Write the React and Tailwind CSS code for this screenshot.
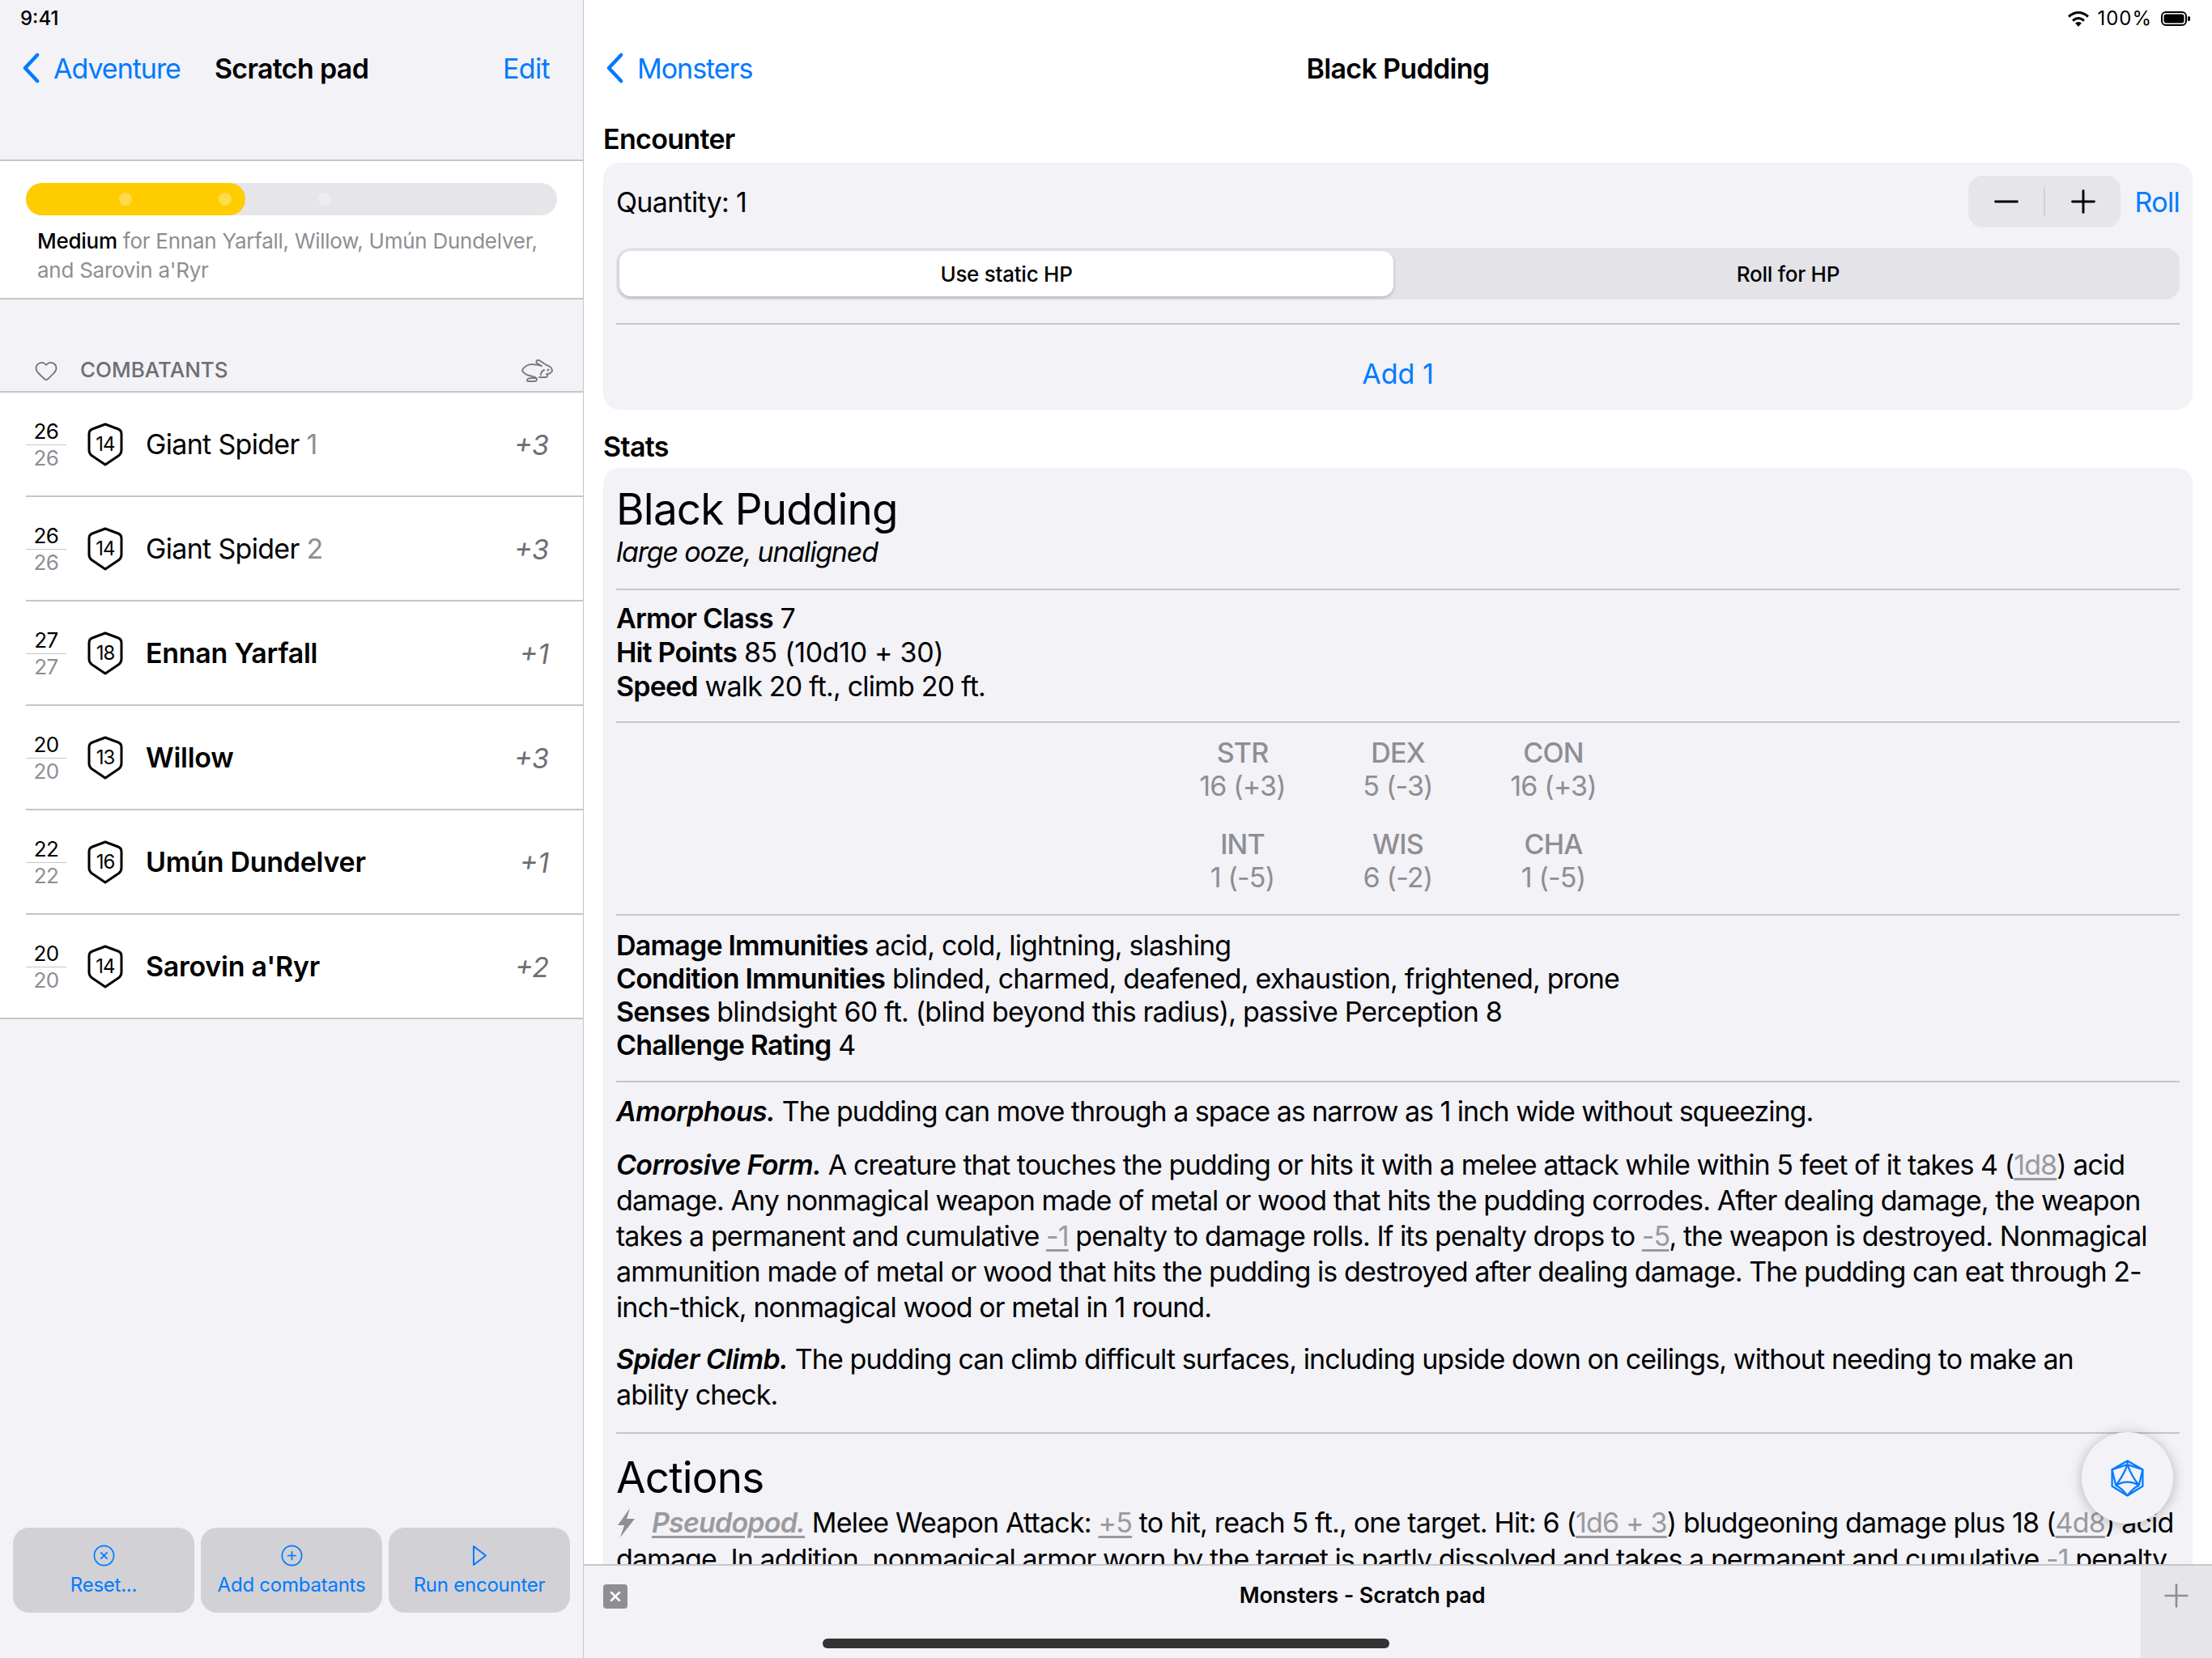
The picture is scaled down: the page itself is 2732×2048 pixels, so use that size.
import { Heart, CircleX, CirclePlus, Minus, Plus, X } from "lucide-react";

const font = "font-['Inter','Liberation_Sans',sans-serif]";

const combatants = [
  { hp: 26, ac: 14, name: "Giant Spider", index: 1, mod: "+3" },
  { hp: 26, ac: 14, name: "Giant Spider", index: 2, mod: "+3" },
  { hp: 27, ac: 18, name: "Ennan Yarfall", mod: "+1" },
  { hp: 20, ac: 13, name: "Willow", mod: "+3" },
  { hp: 22, ac: 16, name: "Umún Dundelver", mod: "+1" },
  { hp: 20, ac: 14, name: "Sarovin a'Ryr", mod: "+2" },
];

function Back({ className }) {
  return (
    <svg viewBox="0 0 22 38" className={`w-[22px] h-[38px] ${className}`} fill="none" stroke="#007aff" strokeWidth="4.5" strokeLinecap="round" strokeLinejoin="round">
      <path d="M19 3 L4 19 L19 35" />
    </svg>
  );
}

function Shield({ ac }) {
  return (
    <div className="relative w-[44px] h-[54px] flex items-center justify-center">
      <svg viewBox="0 0 44 54" className="absolute inset-0 w-full h-full" fill="none" stroke="#000" strokeWidth="3" strokeLinejoin="round">
        <path d="M22 2 L38 8 Q42 9.5 42 14 V34 Q42 38 39 40.5 L22 52 L5 40.5 Q2 38 2 34 V14 Q2 9.5 6 8 Z" />
      </svg>
      <span className="relative text-[24px] tracking-[-0.04em]">{ac}</span>
    </div>
  );
}

function Row({ c, last }) {
  const isPlayer = !c.index;
  return (
    <div className={`pl-[32px] bg-white ${last ? "h-[127px]" : "h-[129px]"}`}>
      <div className={`h-full flex items-center pr-[42px] ${last ? "" : "border-b-2 border-[#c6c6c8]"}`}>
        <div className="w-[50px] pt-[2px] flex flex-col items-center text-[26px] leading-[32px] tracking-[-0.02em]">
          <span className="w-full text-center border-b border-[#c6c6c8]">{c.hp}</span>
          <span className="text-[#8e8e93]">{c.hp}</span>
        </div>
        <div className="ml-[26px]">
          <Shield ac={c.ac} />
        </div>
        <div className={`ml-[28px] flex-1 text-[34px] ${isPlayer ? "font-semibold tracking-[-0.008em]" : "tracking-[-0.02em]"}`}>
          {c.name} {c.index && <span className="text-[#8e8e93]">{c.index}</span>}
        </div>
        <div className="pt-[2px] text-[34px] italic text-[#6e6e73]">{c.mod}</div>
      </div>
    </div>
  );
}

function SideButton({ icon, label }) {
  return (
    <div className="flex-1 h-[105px] rounded-[20px] bg-[#d1d1d6] flex flex-col items-center pt-[20px] gap-[7px] text-[#007aff]">
      {icon}
      <span className="text-[24px] leading-[30px] tracking-[-0.01em]">{label}</span>
    </div>
  );
}

function Sidebar() {
  return (
    <aside className="w-[721px] shrink-0 h-full bg-[#f2f2f7] border-r border-[#c6c6c8] flex flex-col">
      <div className="h-[199px] border-b-2 border-[#c6c6c8] shrink-0">
        <div className="h-[46px] pl-[25px] pt-[6px] text-[24px] leading-[34px] font-medium">9:41</div>
        <div className="flex items-center h-[76px] text-[34px] tracking-[-0.03em] text-[#007aff]">
          <Back className="ml-[27px]" />
          <span className="ml-[17px]">Adventure</span>
          <span className="ml-[42px] font-semibold text-black tracking-[-0.02em]">Scratch pad</span>
          <span className="ml-auto mr-[41px] tracking-[-0.02em]">Edit</span>
        </div>
      </div>
      <div className="h-[171px] bg-white border-b-2 border-[#c6c6c8] px-[32px] pt-[27px] shrink-0">
        <div className="relative h-[40px] rounded-full bg-[#e5e5ea]">
          <div className="h-full w-[271px] rounded-full bg-[#ffcc00]"></div>
          <span className="absolute left-[115px] top-[12px] w-[16px] h-[16px] rounded-full bg-white/30"></span>
          <span className="absolute left-[238px] top-[12px] w-[16px] h-[16px] rounded-full bg-white/30"></span>
          <span className="absolute left-[361px] top-[12px] w-[16px] h-[16px] rounded-full bg-white/30"></span>
        </div>
        <p className="mt-[14px] ml-[14px] text-[26px] leading-[36px] tracking-[-0.01em] text-[#8e8e93]">
          <span className="font-medium text-black">Medium</span> for Ennan Yarfall, Willow, Umún Dundelver, and Sarovin a'Ryr
        </p>
      </div>
      <div className="h-[115px] border-b-2 border-[#c6c6c8] flex items-end pb-[10px] pl-[42px] pr-[36px] shrink-0">
        <Heart className="w-[30px] h-[30px] text-[#6e6e73]" strokeWidth={1.4} />
        <span className="ml-[27px] text-[26px] leading-[32px] font-medium text-[#6e6e73]">COMBATANTS</span>
        <svg viewBox="0 0 40 28" className="ml-auto mb-[1px] w-[40px] h-[28px]" fill="none" stroke="#7c7c80" strokeWidth="2" strokeLinecap="round" strokeLinejoin="round">
          <path d="M38 14 C38 11 35 8 31 7 L22 1 C19 0 17 3 20 5 L25 8 C21 7 17 6 13 6 C7 6 2 10 1 14 C3 17 6 19 10 20 C14 21 15 21 17 22" />
          <path d="M8 24 C10 22.500 14 23 18 23 C20 24 19 27 16 27 L9 27 C7 27 6 25.500 8 24 Z" />
          <path d="M22 22 H30 C32 22 33 19 31 18 C34 18 37 17 38 14" />
          <path d="M24 19 C24 16 26 14 28 13" />
          <circle cx="33" cy="13" r="0.6" />
        </svg>
      </div>
      <div className="border-b-2 border-[#c6c6c8]">
        {combatants.map((c, i) => (
          <Row key={i} c={c} last={i === combatants.length - 1} />
        ))}
      </div>
      <div className="mt-auto flex gap-[8px] px-[16px] pb-[56px]">
        <SideButton icon={<CircleX className="w-[29px] h-[29px]" strokeWidth={1.4} />} label="Reset..." />
        <SideButton icon={<CirclePlus className="w-[29px] h-[29px]" strokeWidth={1.4} />} label="Add combatants" />
        <SideButton
          icon={
            <svg viewBox="0 0 24 29" className="w-[24px] h-[29px]" fill="none" stroke="#007aff" strokeWidth="2" strokeLinejoin="round">
              <path d="M5 3 L20 14.500 L5 26 Z" />
            </svg>
          }
          label="Run encounter"
        />
      </div>
    </aside>
  );
}

function Divider() {
  return <div className="h-[2px] bg-[#c6c6c8]"></div>;
}

function Dice({ children }) {
  return <span className="text-[#9a9a9e] underline underline-offset-4">{children}</span>;
}

function Ability({ name, value }) {
  return (
    <div className="w-[192px] text-center text-[#8e8e93] text-[34px] leading-[41px]">
      <div className="font-medium">{name}</div>
      <div>{value}</div>
    </div>
  );
}

function Detail() {
  return (
    <main className="relative flex-1 min-w-0 h-full bg-white flex flex-col">
      <div className="flex justify-end items-center h-[46px] pr-[27px] text-[24px] tracking-[0.04em] shrink-0">
        <svg viewBox="0 0 28 20" className="w-[28px] h-[20px]" fill="none" stroke="#000" strokeWidth="3">
          <path d="M2 7.500 Q14 -2.500 26 7.500" />
          <path d="M7 12.500 Q14 6.500 21 12.500" />
          <path d="M14 20 L10 15.500 Q14 12.500 18 15.500 Z" fill="#000" stroke="none" />
        </svg>
        <span className="ml-[10px]">100%</span>
        <svg viewBox="0 0 36 18" className="ml-[11px] w-[36px] h-[18px]">
          <rect x="1" y="1" width="30" height="16" rx="5" fill="none" stroke="#000" strokeWidth="2" />
          <rect x="3.500" y="3.500" width="25" height="11" rx="3" fill="#000" />
          <rect x="33" y="6" width="3" height="6" rx="1.500" fill="#000" />
        </svg>
      </div>
      <div className="relative flex items-center h-[76px] text-[34px] tracking-[-0.03em] text-[#007aff] shrink-0">
        <Back className="ml-[27px]" />
        <span className="ml-[17px]">Monsters</span>
        <span className="absolute inset-x-0 text-center font-semibold text-black tracking-[-0.02em]">Black Pudding</span>
      </div>
      <div className="flex-1 min-h-0 overflow-hidden px-[24px]">
        <h2 className="h-[79px] pt-[28px] text-[34px] leading-[44px] font-semibold tracking-[-0.02em]">Encounter</h2>
        <section className="h-[305px] rounded-[20px] bg-[#f2f2f7] px-[16px] pt-[16px]">
          <div className="flex items-center h-[64px] text-[34px] tracking-[-0.02em]">
            <span>Quantity: 1</span>
            <div className="ml-auto w-[188px] h-[64px] rounded-[18px] bg-[#e5e5ea] flex items-center">
              <div className="flex-1 flex justify-center"><Minus className="w-[46px] h-[46px]" strokeWidth={1.5} /></div>
              <div className="w-[2px] h-[36px] bg-[#d1d1d6]"></div>
              <div className="flex-1 flex justify-center"><Plus className="w-[46px] h-[46px]" strokeWidth={1.5} /></div>
            </div>
            <span className="ml-[17px] text-[#007aff]">Roll</span>
          </div>
          <div className="mt-[25px] h-[64px] rounded-[18px] bg-[#e3e3e8] p-[4px] flex text-[26px] font-medium tracking-[-0.01em]">
            <div className="w-[956px] rounded-[14px] bg-white shadow-[0_2px_4px_rgba(0,0,0,0.2)] flex items-center justify-center">Use static HP</div>
            <div className="flex-1 pl-[8px] flex items-center justify-center">Roll for HP</div>
          </div>
          <div className="mt-[29px]"><Divider /></div>
          <div className="h-[104px] pt-[16px] flex items-center justify-center text-[34px] text-[#007aff]">Add 1</div>
        </section>
        <h2 className="h-[72px] pt-[24px] text-[34px] leading-[44px] font-semibold tracking-[-0.02em]">Stats</h2>
        <section className="rounded-t-[20px] bg-[#f2f2f7] px-[16px] text-[34px] tracking-[-0.024em] leading-[42px]">
          <div className="pt-[21px] text-[53px] leading-[60px]">Black Pudding</div>
          <div className="mt-[2px] italic tracking-[-0.035em]">large ooze, unaligned</div>
          <div className="mt-[24px]"><Divider /></div>
          <div className="pt-[14px] pb-[22px]">
            <div><b className="font-semibold">Armor Class</b> 7</div>
            <div><b className="font-semibold">Hit Points</b> <span className="tracking-[-0.01em]">85 (10d10 + 30)</span></div>
            <div><b className="font-semibold">Speed</b> walk 20 ft., climb 20 ft.</div>
          </div>
          <Divider />
          <div className="pt-[16px] pb-[25px] flex flex-col items-center gap-[31px]">
            <div className="flex"><Ability name="STR" value="16 (+3)" /><Ability name="DEX" value="5 (-3)" /><Ability name="CON" value="16 (+3)" /></div>
            <div className="flex"><Ability name="INT" value="1 (-5)" /><Ability name="WIS" value="6 (-2)" /><Ability name="CHA" value="1 (-5)" /></div>
          </div>
          <Divider />
          <div className="pt-[16px] pb-[24px] leading-[41px]">
            <div><b className="font-semibold">Damage Immunities</b> acid, cold, lightning, slashing</div>
            <div><b className="font-semibold">Condition Immunities</b> blinded, charmed, deafened, exhaustion, frightened, prone</div>
            <div><b className="font-semibold">Senses</b> blindsight 60 ft. (blind beyond this radius), passive Perception 8</div>
            <div><b className="font-semibold">Challenge Rating</b> 4</div>
          </div>
          <Divider />
          <p className="mt-[14px] leading-[44px] tracking-[-0.03em]"><b className="font-semibold italic tracking-[-0.02em]">Amorphous.</b> The pudding can move through a space as narrow as 1 inch wide without squeezing.</p>
          <p className="mt-[22px] leading-[44px] tracking-[-0.027em]"><b className="font-semibold italic tracking-[-0.02em]">Corrosive Form.</b> A creature that touches the pudding or hits it with a melee attack while within 5 feet of it takes 4 (<Dice>1d8</Dice>) acid damage. Any nonmagical weapon made of metal or wood that hits the pudding corrodes. After dealing damage, the weapon takes a permanent and cumulative <Dice>-1</Dice> penalty to damage rolls. If its penalty drops to <Dice>-5</Dice>, the weapon is destroyed. Nonmagical ammunition made of metal or wood that hits the pudding is destroyed after dealing damage. The pudding can eat through 2-inch-thick, nonmagical wood or metal in 1 round.</p>
          <p className="mt-[20px] leading-[44px] tracking-[-0.027em]"><b className="font-semibold italic tracking-[-0.02em]">Spider Climb.</b> The pudding can climb difficult surfaces, including upside down on ceilings, without needing to make an<br />ability check.</p>
          <div className="mt-[24px]"><Divider /></div>
          <div className="pt-[24px] text-[53px] leading-[60px]">Actions</div>
          <p className="mt-[3px] leading-[45px]">
            <svg viewBox="0 0 24 38" className="inline-block align-[-7px] w-[24px] h-[38px] mr-[20px]" fill="#8e8e93">
              <path d="M17 1 L2 22 H10 L5 37 L23 14 H13 Z" />
            </svg>
            <b className="font-semibold italic text-[#9a9a9e] underline underline-offset-4">Pseudopod.</b> Melee Weapon Attack: <Dice>+5</Dice> to hit, reach 5 ft., one target. Hit: 6 (<Dice>1d6 + 3</Dice>) bludgeoning damage plus 18 (<Dice>4d8</Dice>) acid<br />
            <span className="tracking-[-0.027em]">damage. In addition, nonmagical armor worn by the target is partly dissolved and takes a permanent and cumulative <Dice>-1</Dice> penalty</span>
          </p>
        </section>
      </div>
      <div className="h-[116px] shrink-0 border-t-2 border-[#c6c6c8] bg-[#f2f2f7] flex relative z-10">
        <div className="w-[1923px] pl-[24px] pr-[54px] pt-[21px] flex">
          <div className="mt-[2px] w-[30px] h-[30px] rounded-[4px] bg-[#8e8e93] flex items-center justify-center">
            <X className="w-[20px] h-[20px] text-white" strokeWidth={3} />
          </div>
          <span className="flex-1 text-center text-[27px] leading-[32px] font-semibold tracking-[-0.005em]">Monsters - Scratch pad</span>
        </div>
        <div className="flex-1 bg-[#e5e5ea] flex items-start justify-center pt-[14px]">
          <Plus className="w-[46px] h-[46px] text-[#8e8e93]" strokeWidth={1.4} />
        </div>
      </div>
      <div className="absolute right-[48px] bottom-[166px] z-20 w-[113px] h-[113px] rounded-full bg-[#f2f2f7] shadow-[0_2px_16px_rgba(0,0,0,0.25)] flex items-center justify-center">
        <svg viewBox="0 0 40 45" className="w-[41px] h-[46px]" fill="none" stroke="#007aff" strokeWidth="2.200" strokeLinejoin="round">
          <path d="M20 1.500 L38.500 12 V32 L20 43.500 L1.500 32 V12 Z" />
          <path d="M20 1.500 V6 M1.500 12 L20 6 L38.500 12 M20 6 Q15 20 6 31 M20 6 Q25 20 34 31 M6 31 Q20 23 34 31 M1.500 12 L6 31 M38.500 12 L34 31 M6 31 Q13 34 20 43.500 M34 31 Q27 34 20 43.500" />
        </svg>
      </div>
    </main>
  );
}

export default function App() {
  return (
    <div className={`relative w-[2732px] h-[2048px] flex overflow-hidden text-black ${font}`}>
      <Sidebar />
      <Detail />
      <div className="absolute left-[1016px] top-[2024px] w-[700px] h-[12px] rounded-full bg-[#333333] z-30"></div>
    </div>
  );
}
